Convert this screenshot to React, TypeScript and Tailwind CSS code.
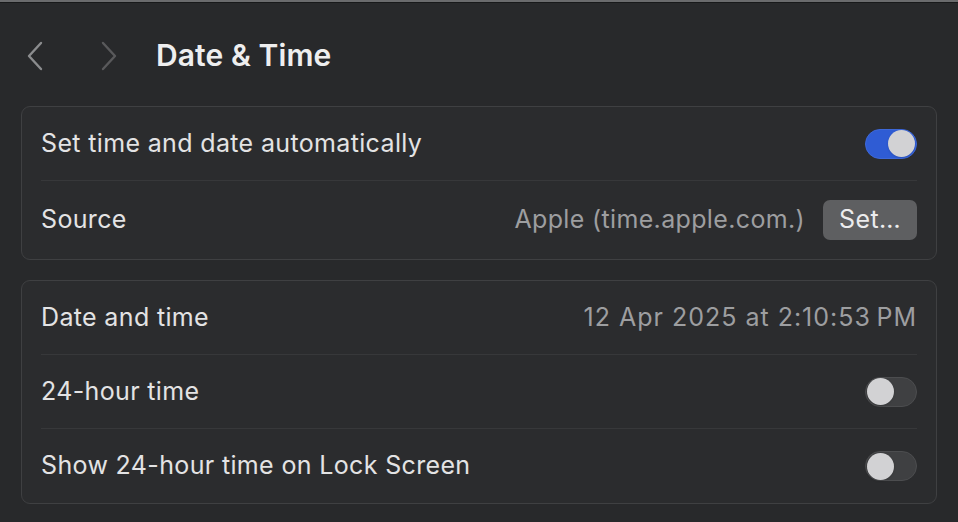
import React, { useState } from 'react';

const Toggle: React.FC<{ on: boolean; onChange: () => void }> = ({ on, onChange }) => (
  <button
    onClick={onChange}
    className={`relative w-[52px] h-[30px] rounded-full border flex items-center px-[1px] ${
      on ? 'bg-[#2f5cd4] border-[#3d68d8] justify-end' : 'bg-[#3f4042] border-[#4c4d4f] justify-start'
    }`}
  >
    <span className="block w-[27px] h-[27px] rounded-full bg-[#d2d2d4] shadow-sm" />
  </button>
);

const Row: React.FC<{ label: string; last?: boolean; tall?: boolean; children?: React.ReactNode }> = ({
  label,
  last,
  tall,
  children,
}) => (
  <div
    className={`${tall ? 'h-[78px]' : 'h-[74px]'} flex items-center justify-between ${
      last ? '' : 'border-b border-[#37383a]'
    }`}
  >
    <span className="text-[#e3e3e4]">{label}</span>
    <div className="flex items-center">{children}</div>
  </div>
);

const App: React.FC = () => {
  const [auto, setAuto] = useState(true);
  const [h24, setH24] = useState(false);
  const [lock24, setLock24] = useState(false);

  return (
    <div
      className="w-[958px] h-[522px] bg-[#28292b] overflow-hidden text-[25px] tracking-[0.35px]"
      style={{ fontFamily: 'Inter, "Noto Sans", sans-serif' }}
    >
      <div className="h-[2px] bg-[#6a6b6d]" />
      <div className="h-[1px] bg-[#18191a]" />

      {/* Header */}
      <div className="h-[103px] flex items-center pl-[26px] pt-[2px]">
        <svg width="18" height="30" viewBox="0 0 18 30" fill="none" className="mr-[56px]">
          <path d="M15 2 L3 15 L15 28" stroke="#8b8c8e" strokeWidth="2.4" strokeLinecap="round" strokeLinejoin="round" />
        </svg>
        <svg width="18" height="30" viewBox="0 0 18 30" fill="none" className="mr-[38px]">
          <path d="M3 2 L15 15 L3 28" stroke="#59595b" strokeWidth="2.4" strokeLinecap="round" strokeLinejoin="round" />
        </svg>
        <h1 className="text-[30px] font-semibold text-[#eeeeef] tracking-[0.1px]">Date &amp; Time</h1>
      </div>

      <div className="px-[21px] flex flex-col gap-[20px]">
        {/* Card 1 */}
        <div className="bg-[#2b2c2e] border border-[#3f4042] rounded-[9px] px-[19px]">
          <Row label="Set time and date automatically">
            <Toggle on={auto} onChange={() => setAuto(!auto)} />
          </Row>
          <Row label="Source" last tall>
            <span className="text-[#9d9ea0] mr-[18px]">Apple (time.apple.com.)</span>
            <button className="w-[94px] h-[40px] rounded-[7px] bg-[#5e5f61] text-[#ececed] flex items-center justify-center">
              Set…
            </button>
          </Row>
        </div>

        {/* Card 2 */}
        <div className="bg-[#2b2c2e] border border-[#3f4042] rounded-[9px] px-[19px]">
          <Row label="Date and time">
            <span className="text-[#9d9ea0] tracking-[1px]">12 Apr 2025 at 2:10:53&#8201;PM</span>
          </Row>
          <Row label="24-hour time">
            <Toggle on={h24} onChange={() => setH24(!h24)} />
          </Row>
          <Row label="Show 24-hour time on Lock Screen" last>
            <Toggle on={lock24} onChange={() => setLock24(!lock24)} />
          </Row>
        </div>
      </div>
    </div>
  );
};

export default App;
